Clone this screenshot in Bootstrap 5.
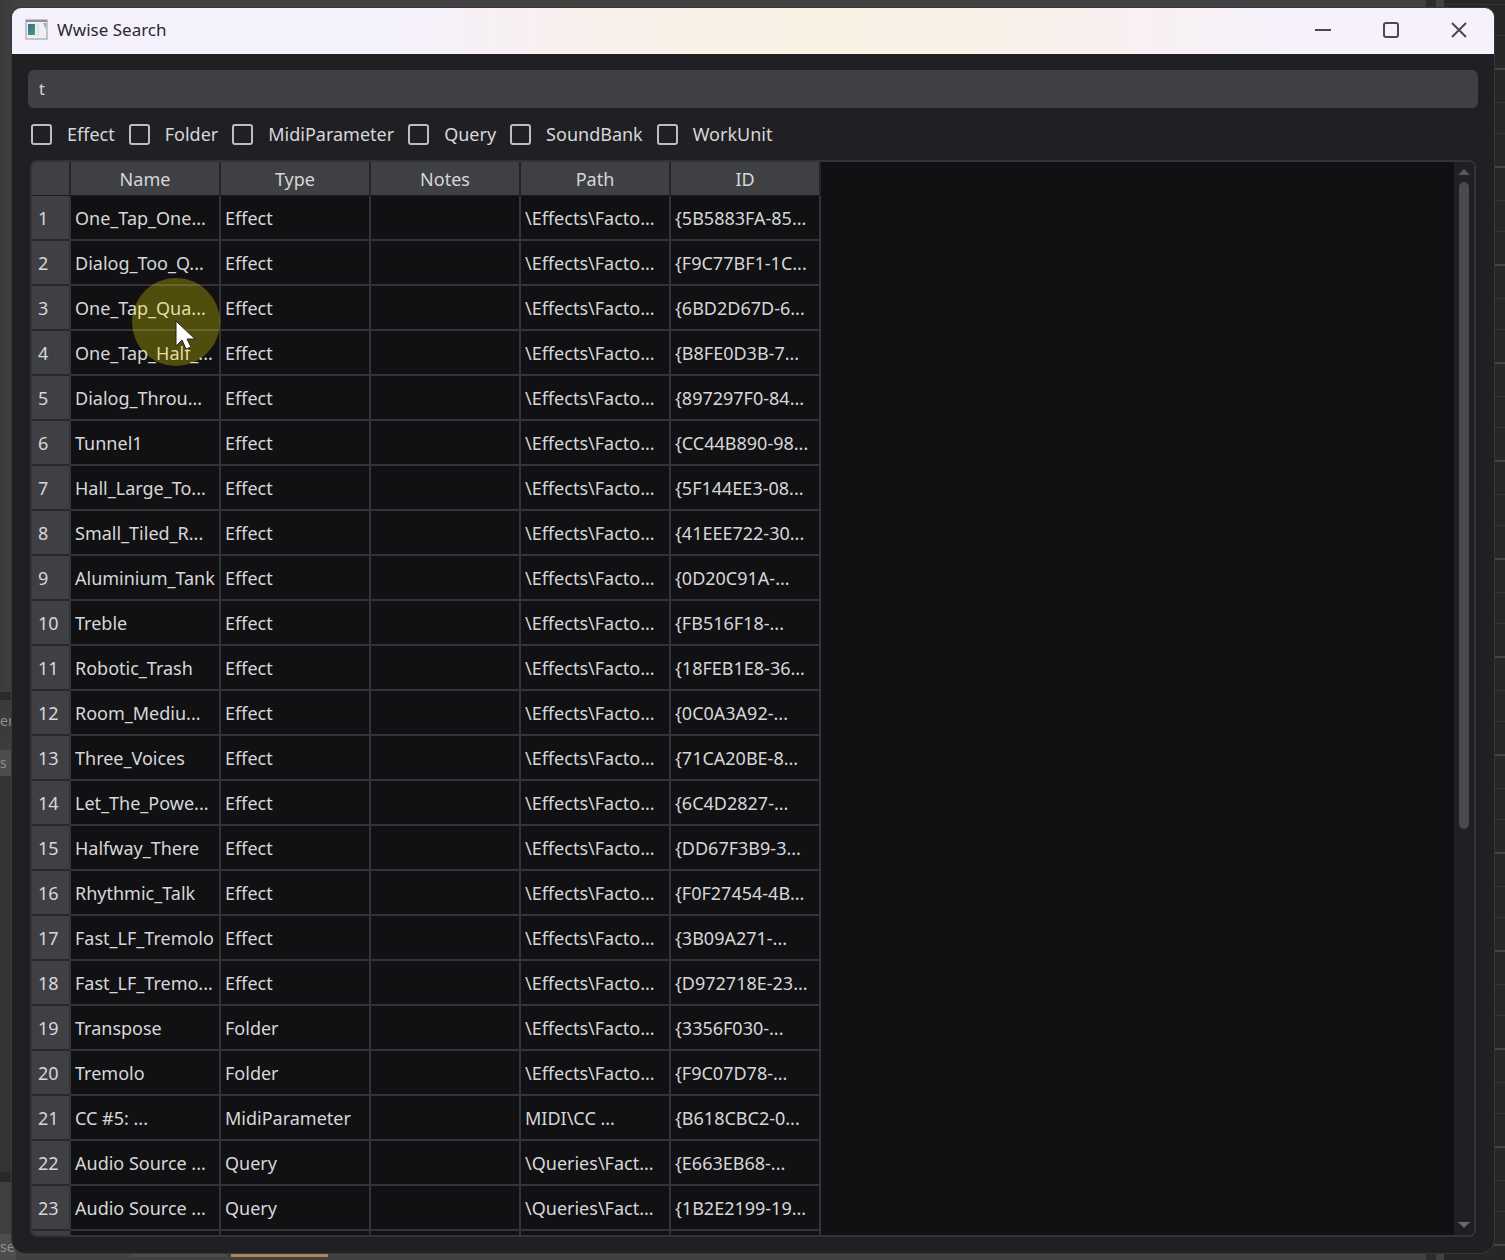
<!DOCTYPE html>
<html lang="en" data-bs-theme="dark">
<head>
<meta charset="utf-8">
<meta name="viewport" content="width=device-width, initial-scale=1">
<title>Wwise Search</title>
<link rel="stylesheet" href="https://cdn.jsdelivr.net/npm/bootstrap@5.3.0/dist/css/bootstrap.min.css">
<style>
body{font-family:"Noto Sans","Open Sans",sans-serif;font-size:18px;line-height:24px;color:#d6d7da;background:#414141;height:100vh;overflow:hidden}
.backdrop{inset:0;z-index:0;color:#8f8f8f}
.back-left{width:16px;font-size:14px;overflow:hidden;background:linear-gradient(90deg,#3a3a3a,#404040)}
.back-left .gap-a{height:692px}
.back-left .tab-a{height:50px;background:#3b3b3b;border-top:8px solid #2b2b2b;display:flex;align-items:center}
.back-left .tab-b{height:26px;background:#4c4c4c;margin-top:8px;display:flex;align-items:center}
.back-left .gap-b{height:396px;background:#343434}
.back-left .bar{height:10px;background:#292929}
.back-left .gap-c{height:52px;background:#404040}
.back-left .tab-c{background:#4d4d4d;display:flex;align-items:center;flex:1}
.back-right{width:79px;border-left:10px solid #2c2c2c;background:#424242}
.back-right div{margin-left:8px;height:100%;background:repeating-linear-gradient(180deg,transparent 0 4px,#353535 4px 5px,transparent 5px 35px,#353535 35px 36px,transparent 36px 68px,#434343 68px 70px,transparent 70px 98px),#272727}
.back-foot{left:130px;right:0;bottom:0;height:7px}
.back-foot span{height:4px;width:97px;background:#4b4b4b}
.back-foot .hot{background:#b08555}
.app-window{z-index:1;margin:8px 11px 7px 12px;height:calc(100vh - 15px);background:#202024;border-radius:9px 9px 14px 14px;overflow:hidden;box-shadow:0 0 0 1px #38383a}
.title-bar{height:46px;padding:0 10px 2px 13px;color:#2b2830;font-size:17px;background:linear-gradient(90deg,#f5f1fc 0,#f5f1fc 26%,#f9f0ee 38%,#faf1e7 46%,#fbf2e6 55%,#faf1e7 64%,#f9f0ee 72%,#f6f1fb 86%)}
.title-bar button{border:0;background:none;width:49px;height:40px;padding:0}
.title-bar .win-buttons{gap:19px;padding-bottom:3px}
.search-box{height:38px;background:#3f4043;border:0;border-radius:6px;color:#d6d7da;padding:0 11px}
.search-box:focus{background:#3f4043;box-shadow:none;color:#d6d7da}
.filters{padding:0 3px;height:52px;gap:14px}
.filters label{gap:15px}
.filters input{appearance:none;width:21px;height:21px;margin:0;border:2px solid #bcbdc0;border-radius:3px;background:transparent}
.grid-frame{margin:0 2px;border:2px solid #333438;border-radius:7px;background:#111113;overflow:hidden;min-height:0}
.grid-scroll{overflow:hidden;min-width:0}
.results{table-layout:fixed;width:789px;border-collapse:separate;border-spacing:0;margin:0}
.results th,.results td{white-space:nowrap;overflow:hidden;font-weight:400;padding:0 4px;border:solid #333438;border-width:0 2px 2px 0}
.results thead th{height:34px;text-align:center;background:#3f4043;border-color:#242528;border-bottom-color:#1b1b1e;border-bottom-width:1px}
.results tbody th{background:#3f4043;border-color:#28292c;border-right-color:#333438;text-align:left;padding-left:6px}
.results tbody tr{height:45px}
.results .c-num{width:39px}
.scroll-rail{width:20px;background:#202024;padding:6px 0}
.scroll-rail .thumb{width:10px;height:61%;border-radius:5px;background:#4a494e;margin-top:6px}
.pointer{left:132px;top:278px;z-index:3;pointer-events:none}
</style>
<script src="https://cdn.jsdelivr.net/npm/bootstrap@5.3.0/dist/js/bootstrap.bundle.min.js"></script>
</head>
<body>
<div class="backdrop position-absolute d-flex justify-content-between" aria-hidden="true">
  <div class="back-left d-flex flex-column">
    <div class="gap-a"></div><div class="tab-a">er</div><div class="tab-b">s</div><div class="gap-b"></div><div class="bar"></div><div class="gap-c"></div><div class="tab-c">se</div>
  </div>
  <div class="back-right"><div></div></div>
  <div class="back-foot position-absolute d-flex align-items-start gap-1"><span></span><span class="hot"></span></div>
</div>
<main class="app-window position-relative d-flex flex-column">
  <header class="title-bar d-flex align-items-center flex-shrink-0">
    <svg width="24" height="22" viewBox="0 0 24 22"><rect x="1" y="1" width="21" height="19" fill="#eef0f2" stroke="#b4b5bb" stroke-width="1.5"/><path d="M1 2h21" stroke="#8d9097" stroke-width="2"/><defs><linearGradient id="pane" x2="1" y2="1"><stop stop-color="#3d6d86"/><stop offset="1" stop-color="#459a86"/></linearGradient></defs><rect x="3" y="5" width="7" height="11" fill="url(#pane)"/><path d="M13 4v13" stroke="#cfd3d7"/><path d="M18 4h3v6z" fill="#82b5a8"/></svg>
    <span class="ms-2 me-auto">Wwise Search</span>
    <div class="win-buttons d-flex ms-auto">
      <button type="button" aria-label="Minimize"><svg width="18" height="18"><path d="M1 9h16" stroke="#4c4850" stroke-width="2"/></svg></button>
      <button type="button" aria-label="Maximize"><svg width="18" height="18"><rect x="2" y="2" width="14" height="14" rx="2" fill="none" stroke="#4c4850" stroke-width="2"/></svg></button>
      <button type="button" aria-label="Close"><svg width="18" height="18"><path d="M2 2l14 14M16 2L2 16" stroke="#4c4850" stroke-width="2"/></svg></button>
    </div>
  </header>
  <div class="d-flex flex-column flex-grow-1 px-3 pt-3 pb-3 overflow-hidden">
    <input class="search-box form-control flex-shrink-0" type="text" value="t" aria-label="Search">
    <div class="filters d-flex align-items-center flex-shrink-0">
      <label class="d-flex align-items-center"><input type="checkbox">Effect</label>
      <label class="d-flex align-items-center"><input type="checkbox">Folder</label>
      <label class="d-flex align-items-center"><input type="checkbox">MidiParameter</label>
      <label class="d-flex align-items-center"><input type="checkbox">Query</label>
      <label class="d-flex align-items-center"><input type="checkbox">SoundBank</label>
      <label class="d-flex align-items-center"><input type="checkbox">WorkUnit</label>
    </div>
    <div class="grid-frame d-flex flex-grow-1">
      <div class="grid-scroll flex-grow-1">
        <table class="results">
          <thead><tr><th class="c-num"></th><th scope="col">Name</th><th scope="col">Type</th><th scope="col">Notes</th><th scope="col">Path</th><th scope="col">ID</th></tr></thead>
          <tbody id="rows"></tbody>
        </table>
      </div>
      <div class="scroll-rail d-flex flex-column align-items-center flex-shrink-0">
        <svg width="12" height="8"><path d="M0 7l6-6 6 6z" fill="#56565b"/></svg>
        <div class="thumb"></div>
        <svg class="mt-auto" width="12" height="8"><path d="M0 1l6 6 6-6z" fill="#68686c"/></svg>
      </div>
    </div>
  </div>
</main>
<svg class="pointer position-absolute" width="88" height="90" viewBox="0 0 88 90" aria-hidden="true"><circle cx="44" cy="44" r="44" fill="#fff000" fill-opacity=".27"/><path d="M44 43v25l6-6 4 9 5-2-4-8h8z" fill="#fff" stroke="#222" stroke-width="1"/></svg>
<script>
const fx='\\Effects\\Facto...', qx='\\Queries\\Fact...';
const data=[
['One_Tap_One...','Effect',fx,'{5B5883FA-85...'],
['Dialog_Too_Q...','Effect',fx,'{F9C77BF1-1C...'],
['One_Tap_Qua...','Effect',fx,'{6BD2D67D-6...'],
['One_Tap_Half_...','Effect',fx,'{B8FE0D3B-7...'],
['Dialog_Throu...','Effect',fx,'{897297F0-84...'],
['Tunnel1','Effect',fx,'{CC44B890-98...'],
['Hall_Large_To...','Effect',fx,'{5F144EE3-08...'],
['Small_Tiled_R...','Effect',fx,'{41EEE722-30...'],
['Aluminium_Tank','Effect',fx,'{0D20C91A-...'],
['Treble','Effect',fx,'{FB516F18-...'],
['Robotic_Trash','Effect',fx,'{18FEB1E8-36...'],
['Room_Mediu...','Effect',fx,'{0C0A3A92-...'],
['Three_Voices','Effect',fx,'{71CA20BE-8...'],
['Let_The_Powe...','Effect',fx,'{6C4D2827-...'],
['Halfway_There','Effect',fx,'{DD67F3B9-3...'],
['Rhythmic_Talk','Effect',fx,'{F0F27454-4B...'],
['Fast_LF_Tremolo','Effect',fx,'{3B09A271-...'],
['Fast_LF_Tremo...','Effect',fx,'{D972718E-23...'],
['Transpose','Folder',fx,'{3356F030-...'],
['Tremolo','Folder',fx,'{F9C07D78-...'],
['CC #5: ...','MidiParameter','MIDI\\CC ...','{B618CBC2-0...'],
['Audio Source ...','Query',qx,'{E663EB68-...'],
['Audio Source ...','Query',qx,'{1B2E2199-19...'],
['','','','']];
document.getElementById('rows').innerHTML=data.map(([n,t,p,id],i)=>
`<tr><th scope="row">${n?i+1:''}</th><td>${n}</td><td>${t}</td><td></td><td>${p}</td><td>${id}</td></tr>`).join('');
</script>
</body>
</html>
